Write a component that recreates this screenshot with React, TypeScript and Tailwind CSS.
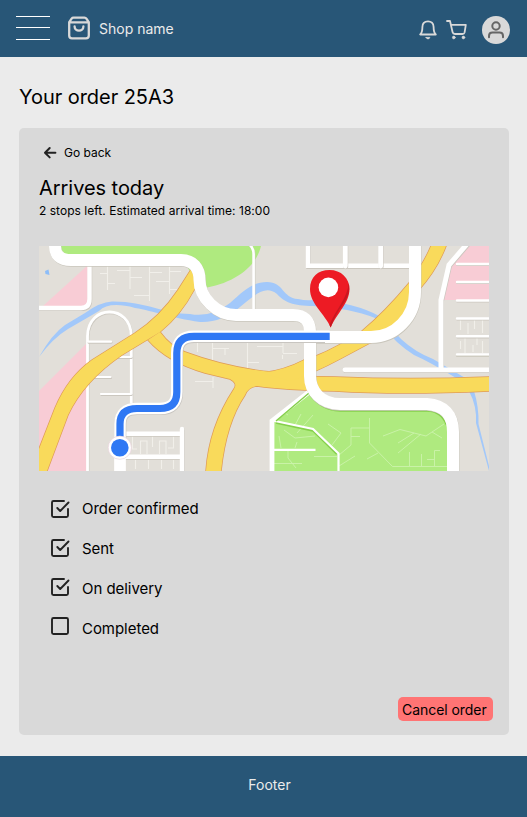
import React from "react";

const yellowRoads = [
  "M32 471 L39 449 L55 408 Q68 377 92 360 L135 333 Q160 317 178 290 L192 268 L203 276 L194 290 Q181 315 160 332 L122 355 Q84 381 68 415 L47 471Z",
  "M148 340 L160 332 Q171 347 185 352 Q228 368 272 372 Q300 377 335 377 Q410 380 489 377 V391 Q400 395 335 391 Q284 390 257 386 Q248 387 245 395 Q226 423 221 471 H206 Q209 427 234 389 Q238 383 230 379 L205 373 Q167 362 148 340Z",
  "M431 246 Q424 263 409 283 Q385 312 362 331 Q338 347 316 356 L304 360 Q285 370 262 373 L290 381 Q314 373 340 359 L370 343 L404 330 L418 291 Q437 270 446 246Z",
];

const mainRoads =
  "M55 240 V246 Q55 260 71 260 H181 C193 260 199.5 268 199.5 280 C199.5 298 217 315 236 315 H293 Q310 315 310 332 V376 C310 391 321 404 340 404 H427 Q453 406 453 432 V475 M415 240 V292 C415 317 395 337 371 337 H308";

const route = "M329.7 336.3 H194 Q176.8 336.3 176.8 353 V392 Q176.8 408.5 160 408.5 H137 Q120 408.5 120 424 V447";

const smallRoads: { d: string; w: number }[] = [
  { d: "M39 308 H81 Q89.5 308 89.5 299 V264", w: 4.4 },
  { d: "M87.5 472 V336 C88 304 131 304 131.3 336 V404", w: 2.8 },
  { d: "M88 341.7 H111 M95 377 H110.5 M101 394 H131 M118 357 H131", w: 2.2 },
  { d: "M124 433.7 H182 M182 429 V472 M124 456.7 H182", w: 4.4 },
  { d: "M249 244 Q253.6 248 253.6 254 V312", w: 2.6 },
  { d: "M308 244 V265.8 H410", w: 4.4 },
  { d: "M345.3 244 V266 M380.7 244 V266", w: 4.8 },
  { d: "M467 244 L449 265 L441 300 V369", w: 5 },
  { d: "M345 369.8 H491", w: 4.8 },
  { d: "M457 264 H491 M457 282 H491 M457 300.5 H491 M457 318.5 H491 M457 336.3 H491 M457 354.5 H491", w: 2.4 },
];

const lanes =
  "M107.5 266 V290 M130 266 V289 M149.5 266 V301 M169.5 266 V294 M100 273.5 H107 M108 283.5 H115 M117 270.5 H130 M130 277.5 H142 M134 295.5 H149 M150 272.5 H162 M156 281.5 H169 M170 271.5 H181 M170 289.5 H177 M197.5 343 V352 M212.5 343 V360 M213 348.5 H229 M225 348 V355 M247.5 343 V368 M257 346.5 H283 M283 343 V353 M283 353.5 H297 M195 381.5 H213 M213 377 V388 M247.5 355 V368 M247.5 362.5 H259 M282.5 355 V359 M132.5 436 V449 H137 M140.5 454 V441 H147 V454 M152.5 436 V447 M159.5 454 V441 H166 V454 M173.5 436 V448 H168 M135.5 460 V469 M148.5 460 V469 M161.5 460 V469 M173.5 460 V469 M460.5 320 V330 M468 323 V334 M474.5 320 V329 M482.5 320 V333 M460.5 341 V349 M465 338 V353 M477 338 V345 M473 345 V352 M482.5 341 V353";

const parkPaths =
  "M294 427 L301 414 M297 433 L313 415 M284 430 L295 438 L315 436 M285 413 L288 415 M279 436 L281 448 M297 442 L295 448 M288 450 V458 L296 468 M274 463.5 H302 M314 456.5 H337 M328 424 L341 433 L332 445 M351 428 H369.5 V418 M351 428 V445 L339 455 M351 436.5 H360 M369.5 428 V443 L392.5 466.5 H447 M339 466 L355 456 M367 459 L378 453 M383 436 L400 429.5 L426 436 L444 424 M398 443 L414 433 M398 453 L421 434 M432 432 L442 438 M409.5 452 V466 M421.5 454 V466 M427 459.5 H434 M434.5 466 V450.5 H440";

function MapView() {
  return (
    <svg className="block h-[225px] w-[450px]" viewBox="39 246 450 225" aria-label="Delivery route map">
      <rect x="39" y="246" width="450" height="225" fill="#e2dfd9" />
      <path d="M58 246 H261 C256 268 232 284 203 288 L180 258 H69Z" fill="#afea7f" />
      <g fill="#f8ccd5">
        <path d="M43 306 L88 265 V306Z M39 391 L87 343 V471 H39Z M467 246 H489 V300 H442 L449 267Z" />
      </g>
      <path d="M45 271 L48.5 269.5 L49.5 275 L45.5 274Z" fill="#8dbdf8" />
      <g fill="#a2c8fa">
        <path d="M39 357 Q52 334 65 325 L85 313 Q100 302 112 301.5 C145 301 164 314 190 314 Q211 318 230 303 C244 290 253 282 267 282 C284 282 282 298 298 299 Q306 301 313 300 Q355 302 381 317 L401 339 Q415 352 433 359 L467 379 L456 378 Q430 362 414 355 Q394 342 386 329 L375 318 Q350 308 313 306 C293 306 284 302 277 294 C265 284 254 296 240 307 Q221 323 200 322 C171 318 154 311 135 308 Q109 301 99 311 L68 329 Q53 338 39 357Z" />
        <path d="M469 391 L474 391 Q479 407 478.5 424 L489 466 V471 L476 423 Q477 406 469 391Z" />
      </g>
      <path d={lanes} fill="none" stroke="#f1efea" strokeWidth="1.1" />
      <path d="M309 391 L274 421 V471 H448 V430 Q446 411 425 410 H340 Q320 409 309 391Z" fill="#afea7f" />
      <path d={parkPaths} fill="none" stroke="#ccf3ab" strokeWidth="0.9" />
      {smallRoads.map((r) => (
        <g key={r.d} fill="none" strokeWidth={r.w} strokeLinecap="round">
          <path d={r.d} stroke="#cbc7bf" transform="translate(0.5 0.9)" />
          <path d={r.d} stroke="#ffffff" />
        </g>
      ))}
      <path d="M456 356.2 H489" stroke="#c9c5b8" strokeWidth="0.7" />
      <g fill="#f9da5b" stroke="#df9b57" strokeWidth="1.4">
        {yellowRoads.map((d) => <path key={d} d={d} />)}
      </g>
      <g fill="#f9da5b">
        {yellowRoads.map((d) => <path key={d} d={d} />)}
        <path d="M411 282 V320 L365 333Z" />
      </g>
      <path d="M309 392 L272 421 V473" fill="none" stroke="#fff" strokeWidth="4.8" />
      <g fill="none">
        <path d="M276 422.5 L313 430.5 L337 454" stroke="#85cf4b" strokeWidth="2.4" />
        <path d="M275 421 L313 429 L338.5 453.5 V472 M274 449.8 H315.5" stroke="#fff" strokeWidth="2.2" />
        <path d="M276 421 L309 393 Q320 410 340 411 H427 Q441 411 446.5 425" stroke="#85cf4b" strokeWidth="1.5" />
        <path d={mainRoads} stroke="#c9c6bc" strokeWidth="12" transform="translate(0.4 0.8)" />
        <path d={mainRoads} stroke="#fff" strokeWidth="12" />
        <path d="M120 447 V473" stroke="#fff" strokeWidth="11.7" />
        <path d={route} stroke="#c8c5c0" strokeWidth="12" transform="translate(0.3 0.6)" />
        <path d={route} stroke="#fff" strokeWidth="11.5" />
        <path d="M325 337 H350" stroke="#fff" strokeWidth="12" />
        <path d={route} stroke="#2f78f4" strokeWidth="7.2" />
      </g>
      <circle cx="119.8" cy="447.7" r="11.6" fill="#fff" stroke="#e8cdd8" strokeWidth="0.6" />
      <circle cx="119.8" cy="447.7" r="8.8" fill="#2f78f4" />
      <path d="M330.7 327.5 C325 314 310 304 310 289 C310 277 318 270 329.5 270 C341 270 349.5 278 349.5 289 C349.5 303 337 313 330.7 327.5Z" fill="#ed1b24" />
      <path d="M348.8 283 C350.5 292 347 299 342.5 305 C338 311 334 318 330.7 327.5 L329.5 325 C336 309 347.5 298 348.8 283Z" fill="#c81720" />
      <circle cx="328.4" cy="287.4" r="9.8" fill="#fff" />
    </svg>
  );
}

function Bag() {
  return (
    <svg className="h-6 w-6" viewBox="0 0 24 24" fill="none" stroke="#d9d9d9" strokeWidth="2.3" strokeLinecap="round" strokeLinejoin="round">
      <path d="M2.2 6.2 V19.5 Q2.2 22.3 5 22.3 H19 Q21.8 22.3 21.8 19.5 V6.2 L19.4 2.7 Q18.7 1.7 17.5 1.7 H6.5 Q5.3 1.7 4.6 2.7Z M2.2 6.3 H21.8 M7.6 10.5 C7.6 15.9 16.4 15.9 16.4 10.5" />
    </svg>
  );
}

function Check({ checked }: { checked: boolean }) {
  return (
    <svg className="h-6 w-6 shrink-0" viewBox="0 0 24 24" fill="none" stroke="#222" strokeWidth="1.9" strokeLinecap="round" strokeLinejoin="round">
      {checked ? (
        <path d="M16 4 H5.5 Q4 4 4 5.5 V18.5 Q4 20 5.5 20 H18.5 Q20 20 20 18.5 V12 M9.3 11 L12.2 14 L20.5 5.5" />
      ) : (
        <rect x="4" y="4" width="16" height="16" rx="1.5" />
      )}
    </svg>
  );
}

const steps = [
  { label: "Order confirmed", done: true, icon: "pt-0" },
  { label: "Sent", done: true, icon: "pb-[2px]" },
  { label: "On delivery", done: true, icon: "pb-[4px]" },
  { label: "Completed", done: false, icon: "pb-[6px]" },
];

export default function App() {
  return (
    <div className="flex h-[817px] w-[527px] flex-col bg-[#ebebeb] font-['Inter',sans-serif] text-black">
      <header className="flex h-[57px] shrink-0 items-start bg-[#285677] text-[#ebebeb]">
        <div className="ml-4 mt-4 flex h-6 w-[34px] flex-col">
          <span className="h-px bg-white" />
          <span className="mt-[10px] h-px bg-white" />
          <span className="mt-[11px] h-px bg-white" />
        </div>
        <div className="ml-[17px] mt-4"><Bag /></div>
        <span className="ml-2 mt-[19px] text-[14px] leading-5">Shop name</span>
        <svg className="ml-auto mt-5 h-5 w-[18px]" viewBox="0 0 18 20" fill="none" stroke="#d9d9d9" strokeWidth="1.8" strokeLinecap="round" strokeLinejoin="round">
          <path d="M1.2 14.5 H16.8 Q14.6 12.5 14.6 7 C14.6 3.2 12.2 1.4 9 1.4 C5.8 1.4 3.4 3.2 3.4 7 Q3.4 12.5 1.2 14.5Z" />
          <path d="M7.1 17.4 H10.9 Q10.3 18.9 9 18.9 Q7.7 18.9 7.1 17.4Z" fill="#d9d9d9" strokeWidth="0.8" />
        </svg>
        <svg className="ml-[9px] mt-5 h-5 w-[21px]" viewBox="0 0 21 20" fill="none" stroke="#d9d9d9" strokeWidth="1.8" strokeLinecap="round" strokeLinejoin="round">
          <path d="M1 1 H4 L6.6 12.2 Q7 14 9 14 H16.5 Q18.2 14 18.6 12.4 L19.8 4.9 H5" />
          <circle cx="7.8" cy="17.5" r="1.4" fill="#d9d9d9" strokeWidth="0.6" />
          <circle cx="17.4" cy="17.5" r="1.4" fill="#d9d9d9" strokeWidth="0.6" />
        </svg>
        <div className="ml-[15px] mr-[17px] mt-4 flex h-7 w-7 items-center justify-center rounded-full bg-[#d9d9d9]">
          <svg className="h-5 w-5" viewBox="0 0 20 20" fill="none" stroke="#666" strokeWidth="2" strokeLinecap="round" strokeLinejoin="round">
            <circle cx="10" cy="6" r="3.7" />
            <path d="M3 17.2 V16 Q3 12.6 6.5 12.6 H13.5 Q17 12.6 17 16 V17.2" />
          </svg>
        </div>
      </header>

      <main className="flex flex-1 flex-col pl-[19px] pr-[18px] pt-[25px]">
        <h1 className="text-[20px] leading-[30px] tracking-[-0.05px]">Your order 25A3</h1>
        <section className="mt-4 flex h-[607px] flex-col rounded-[5px] bg-[#d9d9d9] px-5 pt-4">
          <button className="ml-1 flex h-[18px] items-center text-[12px] leading-[18px]">
            <svg className="mr-[7px] h-[14px] w-[14px]" viewBox="0 0 14 14" fill="none" stroke="#222" strokeWidth="2" strokeLinecap="round" strokeLinejoin="round">
              <path d="M6.7 2 L2 6.7 L6.7 11.4 M2.4 6.7 H12.4" />
            </svg>
            Go back
          </button>
          <h2 className="mt-[13px] text-[20px] leading-[26px] tracking-[-0.05px]">Arrives today</h2>
          <p className="mt-px text-[12px] leading-[18px] tracking-[0.03px]">2 stops left. Estimated arrival time: 18:00</p>
          <div className="mt-[26px]"><MapView /></div>
          <ul className="ml-[9px] mt-[18px]">
            {steps.map((step) => (
              <li key={step.label} className="flex h-10 items-center text-[15px] leading-5 tracking-[-0.04px]">
                <span className={step.icon}><Check checked={step.done} /></span>
                <span className="ml-[10px]">{step.label}</span>
              </li>
            ))}
          </ul>
          <button className="-mr-1 mb-[14px] ml-auto mt-auto flex h-6 w-[95px] items-center rounded-[5px] bg-[#ff7474] pl-1 text-[14px] tracking-[-0.05px]">
            <span className="whitespace-nowrap">Cancel order</span>
          </button>
        </section>
      </main>

      <footer className="flex h-[61px] shrink-0 items-center justify-center bg-[#285677] pl-3 pb-[4px] text-[14px] text-[#ebebeb]">
        Footer
      </footer>
    </div>
  );
}
